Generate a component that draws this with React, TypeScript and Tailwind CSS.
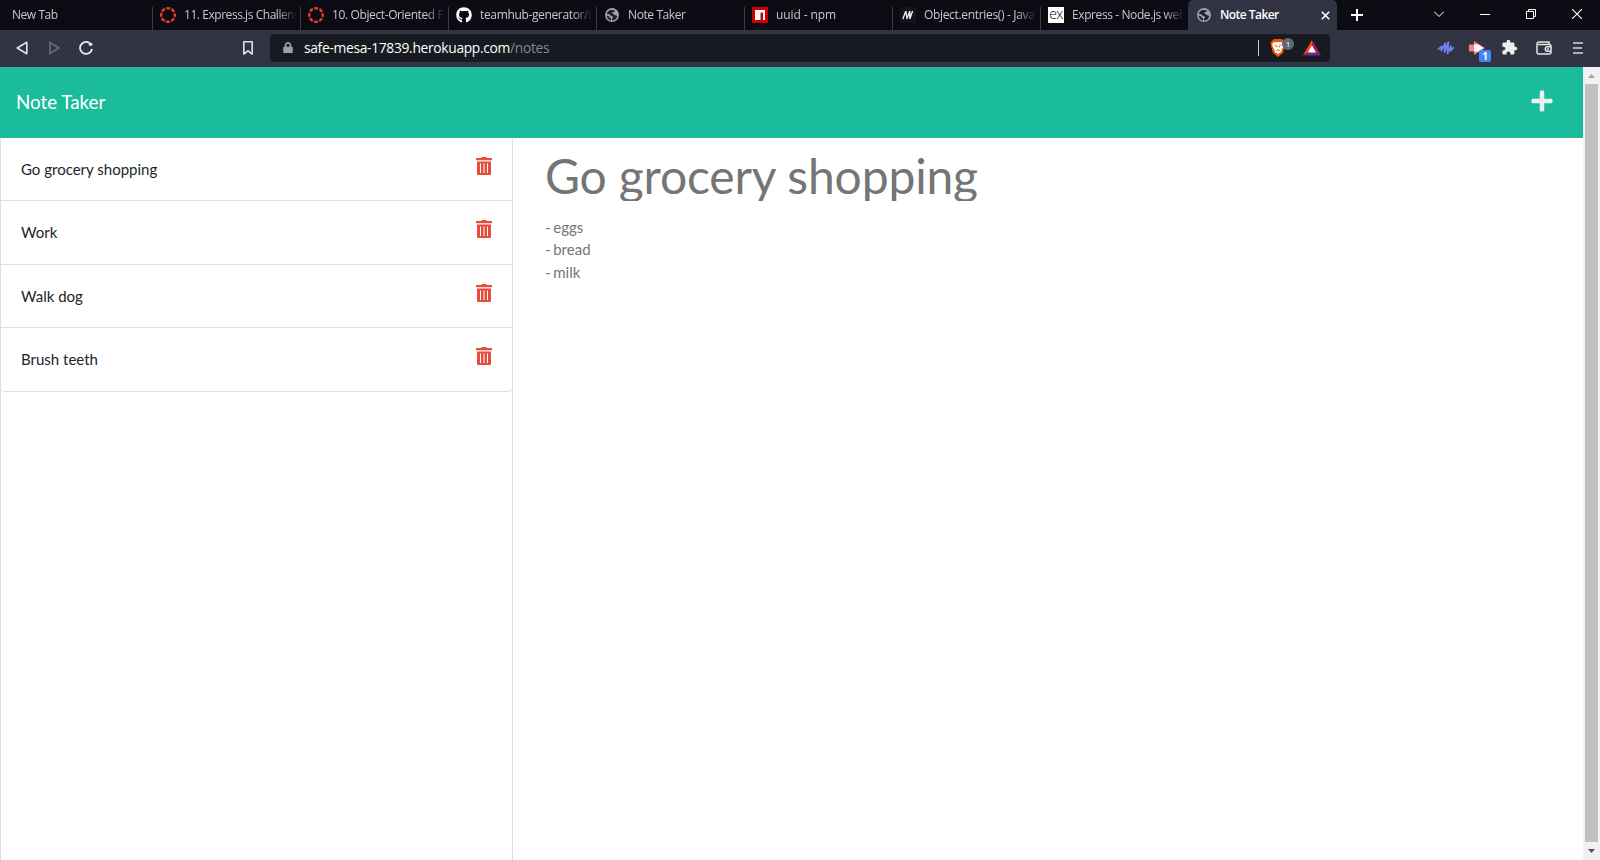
import React from "react";
import { FaGithub, FaPlus, FaLock } from "react-icons/fa";
import { MdExtension } from "react-icons/md";

type IconName = "canvas" | "github" | "globe" | "npm" | "mdn" | "express";

type Tab = { title: string; icon?: IconName; active?: boolean; size: string; spacing: string };

const tabs: Tab[] = [
  { title: "New Tab", size: "w-[153px] pl-3", spacing: "tracking-[-0.45px]" },
  { title: "11. Express.js Challenges", icon: "canvas", size: "w-[148px] pl-[7px]", spacing: "tracking-[-0.45px]" },
  { title: "10. Object-Oriented Programming", icon: "canvas", size: "w-[148px] pl-[7px]", spacing: "tracking-[-0.38px]" },
  { title: "teamhub-generator/index", icon: "github", size: "w-[148px] pl-[7px]", spacing: "tracking-[-0.35px]" },
  { title: "Note Taker", icon: "globe", size: "w-[148px] pl-[7px]", spacing: "tracking-[-0.4px]" },
  { title: "uuid - npm", icon: "npm", size: "w-[148px] pl-[7px]", spacing: "tracking-[-0.1px]" },
  { title: "Object.entries() - JavaScript", icon: "mdn", size: "w-[148px] pl-[7px]", spacing: "tracking-[-0.33px]" },
  { title: "Express - Node.js web app", icon: "express", size: "w-[147px] pl-[7px]", spacing: "tracking-[-0.4px]" },
  { title: "Note Taker", icon: "globe", active: true, size: "w-[149px] pl-2", spacing: "tracking-[-0.55px]" },
];

function TabIcon({ name }: { name: IconName }) {
  switch (name) {
    case "canvas":
      return (
        <svg width="16" height="16" viewBox="0 0 16 16" fill="none" stroke="#e83c2c" strokeWidth="2.4">
          <circle cx="8" cy="8" r="6.8" strokeDasharray="3.9 1.44" strokeDashoffset="1.95" />
        </svg>
      );
    case "github":
      return <FaGithub className="size-4 text-white" />;
    case "globe":
      return (
        <svg width="16" height="16" viewBox="0 0 16 16">
          <circle cx="8" cy="8" r="7" fill="#9da0a8" />
          <path
            d="M8.6 3.2H10.8C10.8 5 9.8 5.2 8.6 5.2C7.8 5.2 7.8 6.6 8.8 6.8C10.4 7 10.2 8.6 12.4 8.6L13.2 9.2C12.6 12 10.2 13.4 8 13.4V11.6C9.4 11.4 9.4 9.6 8 9.4C6.6 9.2 6.6 8 5 8L2.6 7.4C3 4.6 5.6 2.6 8.6 3.2Z"
            fill="#20212c"
          />
          <path d="M2.4 6.6L5.2 7.2L5.8 8.6L8.4 9.6L8.6 10.4L7.2 12L6.8 14L3 12Z" fill="#9da0a8" />
          <path d="M2.7 8.4L5 9.2L5.6 10.6L7 11.2V13.4C4.6 13 2.7 11 2.7 8.4Z" fill="#20212c" />
        </svg>
      );
    case "npm":
      return (
        <svg width="16" height="16" viewBox="0 0 16 16">
          <path d="M0 0H16V16H0Z" fill="#cb0000" />
          <path d="M3 3H13V13H11V5.5H8.5V13H3Z" fill="#fff" />
        </svg>
      );
    case "mdn":
      return (
        <svg width="16" height="16" viewBox="0 0 16 16">
          <path d="M0 0H16V16H0Z" fill="#15141a" />
          <path d="M2.8 12L5.8 4.2M5.8 4L7 11.5M6.8 12L9.8 4.2M9.8 4V11.5M9.8 12L12.6 4" stroke="#f4f4f4" strokeWidth="1.3" fill="none" />
        </svg>
      );
    case "express":
      return (
        <span className="flex size-4 justify-center bg-white font-['Open_Sans',sans-serif] text-[14px] leading-[13px] font-light tracking-[-0.5px] text-black">
          ex
        </span>
      );
  }
}

function TabStrip() {
  return (
    <div className="flex h-[30px] bg-[#0b0b14]">
      {tabs.map((tab, i) => (
        <div
          key={i}
          className={`flex h-[30px] shrink-0 items-center ${tab.size} ${tab.active ? "rounded-t-[5px] bg-[#323443]" : ""}`}
        >
          {tab.icon && (
            <span className="mr-2 flex size-4 shrink-0">
              <TabIcon name={tab.icon} />
            </span>
          )}
          <span
            className={`min-w-0 flex-1 overflow-hidden text-[12px] leading-4 whitespace-nowrap ${tab.spacing} ${
              tab.active
                ? "font-semibold text-white"
                : "mask-[linear-gradient(to_right,black_calc(100%-20px),transparent)] mr-[3px] text-[#c8c9ce]"
            }`}
          >
            {tab.title}
          </span>
          {tab.active ? (
            <svg className="mr-[7px] shrink-0" width="9" height="9" viewBox="0 0 9 9" stroke="#fff" strokeWidth="1.6">
              <path d="M.8.8L8.2 8.2M8.2.8L.8 8.2" />
            </svg>
          ) : (
            <span className={`mt-[7px] h-[23px] w-px shrink-0 ${i === 7 ? "" : "bg-[#3b3b40]"}`} />
          )}
        </div>
      ))}
      <svg className="mt-[9px] ml-[14px]" width="12" height="12" viewBox="0 0 12 12" stroke="#fff" strokeWidth="2">
        <path d="M6 0V12M0 6H12" />
      </svg>
      <svg className="mt-[11px] ml-[71px]" width="10" height="6" viewBox="0 0 10 6" stroke="#fff" fill="none">
        <path d="M0 .5L5 5.5L10 .5" />
      </svg>
      <svg className="mt-[14px] ml-[36px]" width="10" height="1" viewBox="0 0 10 1" fill="#fff">
        <path d="M0 0H10V1H0Z" />
      </svg>
      <svg className="mt-[9px] ml-[36px]" width="10" height="10" viewBox="0 0 10 10" stroke="#fff" fill="none">
        <path d="M.5 2.5H7.5V9.5H.5ZM2.5 2.5V.5H9.5V7.5H7.5" />
      </svg>
      <svg className="mt-[9px] ml-[36px]" width="10" height="10" viewBox="0 0 10 10" stroke="#fff" strokeWidth="1.1">
        <path d="M0 0L10 10M10 0L0 10" />
      </svg>
    </div>
  );
}

function Toolbar() {
  return (
    <div className="flex h-[37px] items-center bg-[#323443]">
      <svg className="-mt-px ml-4" width="12" height="14" viewBox="0 0 12 14" fill="none" stroke="#e4e4e8" strokeWidth="1.6" strokeLinejoin="round">
        <path d="M10.8 1.3V12.7L1.2 7Z" />
      </svg>
      <svg className="-mt-px ml-[21px]" width="12" height="14" viewBox="0 0 12 14" fill="none" stroke="#6d6f7b" strokeWidth="1.5" strokeLinejoin="round">
        <path d="M1 1.3V12.7L10 7Z" />
      </svg>
      <svg className="-mt-px ml-[18px]" width="14" height="14" viewBox="0 0 14 14" fill="none" stroke="#ececf0" strokeWidth="1.8">
        <path d="M10.5 2A6 6 0 1 0 13 8" />
        <circle cx="11.6" cy="3.2" r="1.8" fill="#ececf0" stroke="none" />
      </svg>
      <svg className="-mt-px ml-[150px]" width="10" height="14" viewBox="0 0 10 14" fill="none" stroke="#e0e0e5" strokeWidth="1.6">
        <path d="M.8.8H9.2V13L5 9.8L.8 13Z" strokeLinejoin="round" />
      </svg>
      <div className="-mt-px ml-[17px] flex h-7 w-[1060px] items-center rounded bg-[#171a21]">
        <FaLock className="-mt-px ml-[13px] h-[11px] w-[10px] text-[#9c9ea7]" />
        <span className="ml-[11px] text-[13.8px] leading-5 tracking-[-0.31px] text-white">
          safe-mesa-17839.herokuapp.com<span className="text-[#868990]">/notes</span>
        </span>
        <span className="ml-auto h-4 w-px bg-[#c5c6ca]" />
        <span className="relative ml-[11px] h-[18px] w-6">
          <svg width="16" height="18" viewBox="0 0 16 18">
            <path d="M4 0H12L15.5 3.5L15 7L13 14L8 18L3 14L1 7L.5 3.5Z" fill="#f4510b" />
            <path d="M3 3.6L8 3L13 3.6L13.8 6.5L11.5 11L11 13L8 15L5 13L4.5 11L2.2 6.5Z" fill="#fff" />
            <path d="M4.5 6L7 7L6.5 8.5M11.5 6L9 7L9.5 8.5M6 11.8L8 10.8L10 11.8" stroke="#f4510b" strokeWidth=".9" fill="none" />
          </svg>
          <span className="absolute -top-px left-3 flex h-3 w-3 items-center justify-center rounded-full bg-[#63677a] text-[8px] leading-none text-white">1</span>
        </span>
        <svg className="mr-[9px] ml-[9px]" width="18" height="16" viewBox="0 0 18 16">
          <path d="M9 0L0 15.5L9 10Z" fill="#ff4724" />
          <path d="M9 0L18 15.5L9 10Z" fill="#9e1f63" />
          <path d="M0 15.5H18L9 10Z" fill="#662d91" />
          <path d="M9 5.5L5 12.5H13Z" fill="#fff" />
        </svg>
      </div>
      <svg className="-mt-px ml-[107px]" width="18" height="16" viewBox="0 0 18 16" fill="none" stroke="#6c85f5" strokeWidth="1.7" strokeLinecap="round" strokeLinejoin="round">
        <path d="M1.5 9L4.6 6.6L4.4 10.6L8.4 3.2L7.6 12.2L11.4 2.2L10.6 13.4L14 6.2L13.8 10.6L16.4 7.6" />
      </svg>
      <span className="relative ml-[14px] h-4 w-[22px]">
        <svg width="17" height="14" viewBox="0 0 17 14">
          <path d="M0 3.5H5V0L16 7L5 14V10.5H0Z" fill="#ff7b7f" />
          <path d="M5 3.5H9L14.5 7L9 10.5H5Z" fill="#fff" />
        </svg>
        <span className="absolute top-[9px] left-[10px] flex h-3 w-3 items-center justify-center rounded-[2px] bg-[#4285f4] text-[10px] leading-none font-bold text-white">1</span>
      </span>
      <MdExtension className="-mt-[2px] ml-[10px] size-[17px] text-[#ededf0]" />
      <svg className="-mt-px ml-[18px]" width="16" height="14" viewBox="0 0 16 14" fill="none" stroke="#e4e4e8" strokeWidth="1.5">
        <path d="M13 3.5V1H3A2 2 0 0 0 1 3V11A2 2 0 0 0 3 13H13A2 2 0 0 0 15 11V5.5A2 2 0 0 0 13 3.5H2M15 5.8H11.5A2.2 2.2 0 0 0 11.5 10.2H15M11 8H13" />
      </svg>
      <svg className="-mt-px ml-[21px]" width="10" height="12" viewBox="0 0 10 12" stroke="#d5d5da" strokeWidth="1.6">
        <path d="M0 1H10M0 6H9M0 11H10" />
      </svg>
    </div>
  );
}

function TrashIcon() {
  return (
    <svg className="mt-[19px] mr-5 shrink-0" width="16" height="18" viewBox="0 0 16 18">
      <path d="M5 1L6 0H10L11 1H15.5L16 1.5V3.2H0V1.5L.5 1Z" fill="#e74c3c" />
      <path fillRule="evenodd" d="M1 4.5H15V17Q15 18 14 18H2Q1 18 1 17ZM4 6.5V16H5V6.5ZM7.5 6.5V16H8.5V6.5ZM11 6.5V16H12V6.5Z" fill="#e74c3c" />
    </svg>
  );
}

const notes = [
  { title: "Go grocery shopping", height: "h-[63px]" },
  { title: "Work", height: "h-16" },
  { title: "Walk dog", height: "h-[63px]" },
  { title: "Brush teeth", height: "h-16 rounded-b" },
];

function Scrollbar() {
  return (
    <div className="flex w-[17px] shrink-0 flex-col items-center bg-[#f1f1f1]">
      <svg className="mt-[7px]" width="7" height="4" viewBox="0 0 7 4" fill="#a3a3a3">
        <path d="M3.5 0L7 4H0Z" />
      </svg>
      <div className="mt-[6px] h-[758px] w-[13px] bg-[#c1c1c1]" />
      <svg className="mt-[7px]" width="7" height="4" viewBox="0 0 7 4" fill="#505050">
        <path d="M3.5 4L7 0H0Z" />
      </svg>
    </div>
  );
}

export default function App() {
  return (
    <div className="flex h-[860px] w-[1600px] flex-col overflow-hidden bg-white font-['Open_Sans','Noto_Sans',sans-serif]">
      <TabStrip />
      <Toolbar />
      <div className="flex min-h-0 flex-1">
        <div className="flex flex-1 flex-col font-[Lato,sans-serif]">
          <header className="flex h-[71px] items-center justify-between bg-[#1abc9c] pr-[29px] pl-4">
            <span className="-mt-0.5 text-[18.75px] leading-7 text-white">Note Taker</span>
            <FaPlus className="-mt-1 size-6 text-[#ecf0f1]" />
          </header>
          <main className="flex min-h-0 flex-1">
            <div className="w-[513px] border-x border-[#dfdfdf]">
              <ul>
                {notes.map((note) => (
                  <li key={note.title} className={`flex justify-between border-b border-[#dfdfdf] ${note.height}`}>
                    <span className="mt-5 ml-5 text-[15px] leading-[22.5px] text-[#212529]">{note.title}</span>
                    <TrashIcon />
                  </li>
                ))}
              </ul>
            </div>
            <article className="flex flex-col pt-[15px] pl-8 text-[#757575]">
              <h1 className="h-12 overflow-hidden text-[48px] leading-[46px] tracking-[-0.16px] whitespace-nowrap">Go grocery shopping</h1>
              <p className="mt-[14.9px] text-[15px] leading-[22.5px] whitespace-pre-line [word-spacing:-1.2px]">{"- eggs\n- bread\n- milk"}</p>
            </article>
          </main>
        </div>
        <Scrollbar />
      </div>
    </div>
  );
}
